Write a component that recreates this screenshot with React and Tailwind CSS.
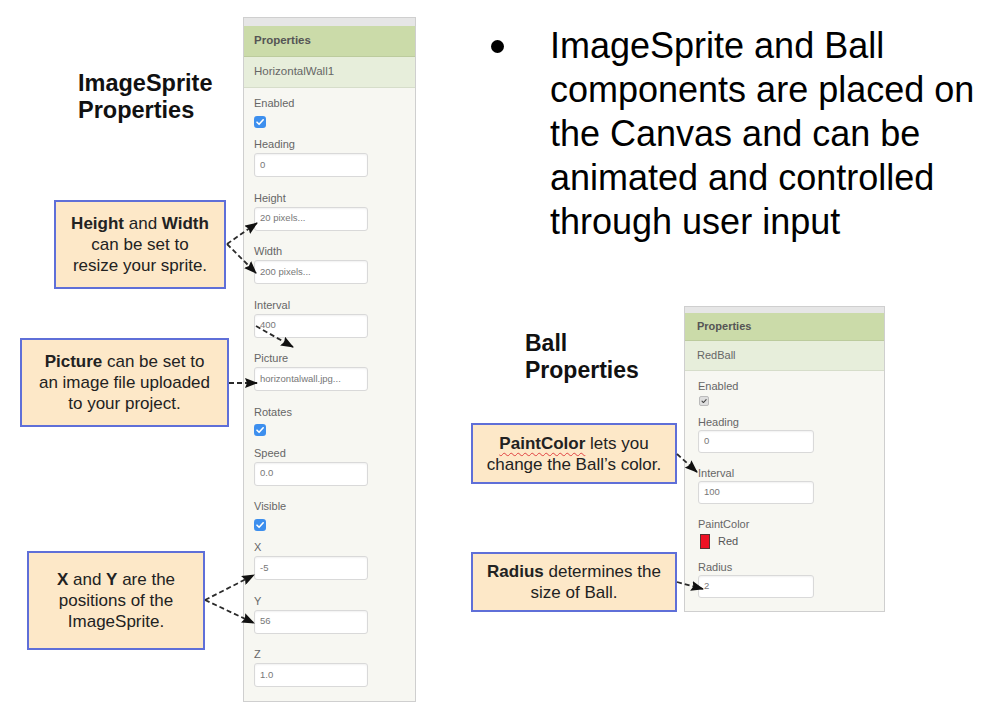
import React from 'react'

const font = { fontFamily: '"Liberation Sans", Arial, sans-serif' }

const Check = ({ color = 'white' }) => (
    <svg viewBox="0 0 12 12" className="w-full h-full">
        <path d="M3 6.2 L5.1 8.3 L9.2 3.8" fill="none" stroke={color} strokeWidth="1.6" strokeLinecap="round" strokeLinejoin="round" />
    </svg>
)

const TextBox = ({ value, wide }) => (
    <div
        className={`${wide ? 'w-[116px] h-[23px]' : 'w-[114px] h-[24px]'} bg-white border border-[#d9d9d9] rounded-[3px] shadow-[inset_0_1px_2px_rgba(0,0,0,0.06)] flex items-center px-[5px] text-[9.5px] text-[#777]`}
    >
        {value}
    </div>
)

const Field = ({ label, value }) => (
    <div className="flex flex-col mb-[13.5px]">
        <div className="h-[14px] leading-[14px] text-[11px] text-[#666]">{label}</div>
        <div className="mt-[2px]">
            <TextBox value={value} />
        </div>
    </div>
)

const CheckField = ({ label }) => (
    <div className="flex flex-col mb-[9.5px]">
        <div className="h-[14px] leading-[14px] text-[11px] text-[#666]">{label}</div>
        <div className="mt-[5.5px] w-[12px] h-[12px] rounded-[3px] bg-[#3d8fee]">
            <Check />
        </div>
    </div>
)

const BallField = ({ label, value }) => (
    <div className="flex flex-col mb-[13px]">
        <div className="h-[14px] leading-[14px] text-[11px] text-[#666]">{label}</div>
        <div className="mt-[1px]">
            <TextBox value={value} wide />
        </div>
    </div>
)

const Callout = ({ className, children }) => (
    <div
        className={`${className} shrink-0 bg-[#fde8c8] border-2 border-[#5f6fd8] flex items-center justify-center text-center text-[17px] leading-[21px] text-[#222]`}
    >
        <div>{children}</div>
    </div>
)

// dashed pointer lines from the callouts to the property fields
const Arrows = () => {
    const lines = [
        [227, 244, 257, 223],
        [227, 244, 256, 273],
        [229, 383, 257, 383],
        [256, 326, 293, 347],
        [205, 600, 254, 575],
        [205, 600, 254, 623],
        [677, 454, 697, 472],
        [677, 582, 703, 589],
    ]
    return (
        <svg className="absolute left-0 top-0 w-[989px] h-[716px] pointer-events-none" viewBox="0 0 989 716">
            <defs>
                <marker id="head" markerWidth="13" markerHeight="10" refX="12" refY="5" orient="auto" markerUnits="userSpaceOnUse">
                    <path d="M0 0 L13 5 L0 10 L2 5 Z" fill="#111" />
                </marker>
            </defs>
            {lines.map(([x1, y1, x2, y2], i) => (
                <line
                    key={i}
                    x1={x1}
                    y1={y1}
                    x2={x2}
                    y2={y2}
                    stroke="#2a2a2a"
                    strokeWidth="1.8"
                    strokeDasharray="5 3"
                    markerEnd="url(#head)"
                />
            ))}
        </svg>
    )
}

const App = () => {
    return (
        <div className="relative w-[989px] h-[716px] bg-white overflow-hidden flex" style={font}>
            {/* left annotations */}
            <div className="w-[243px] shrink-0 flex flex-col">
                <div className="ml-[78px] mt-[70px] text-[23.5px] leading-[27px] font-bold text-[#111]">
                    ImageSprite
                    <br />
                    Properties
                </div>
                <Callout className="ml-[54px] mt-[76px] w-[172px] h-[89px]">
                    <b>Height</b> and <b>Width</b>
                    <br />
                    can be set to
                    <br />
                    resize your sprite.
                </Callout>
                <Callout className="ml-[20px] mt-[49px] w-[209px] h-[89px]">
                    <b>Picture</b> can be set to
                    <br />
                    an image file uploaded
                    <br />
                    to your project.
                </Callout>
                <Callout className="ml-[27px] mt-[124px] w-[178px] h-[99px]">
                    <b>X</b> and <b>Y</b> are the
                    <br />
                    positions of the
                    <br />
                    ImageSprite.
                </Callout>
            </div>

            {/* ImageSprite properties panel */}
            <div className="mt-[17px] w-[173px] h-[685px] shrink-0 flex flex-col border border-[#cfcfcf] bg-[#f7f7f2]">
                <div className="h-[8px] bg-[#e6e6e6]" />
                <div className="h-[31px] bg-[#cbdba9] border-b border-[#bccb9d] flex items-center pl-[10px] text-[11.5px] font-bold text-[#555]">
                    Properties
                </div>
                <div className="h-[31px] bg-[#e7eedb] border-b border-[#d6ddca] flex items-center pl-[10px] text-[11.5px] text-[#666]">
                    HorizontalWall1
                </div>
                <div className="flex flex-col pl-[10px] pt-[8px]">
                    <CheckField label="Enabled" />
                    <Field label="Heading" value="0" />
                    <Field label="Height" value="20 pixels..." />
                    <Field label="Width" value="200 pixels..." />
                    <Field label="Interval" value="400" />
                    <Field label="Picture" value="horizontalwall.jpg..." />
                    <CheckField label="Rotates" />
                    <Field label="Speed" value="0.0" />
                    <CheckField label="Visible" />
                    <Field label="X" value="-5" />
                    <Field label="Y" value="56" />
                    <Field label="Z" value="1.0" />
                </div>
            </div>

            {/* right side */}
            <div className="flex-1 flex flex-col">
                <div className="mt-[24px] ml-[75px] flex items-start">
                    <div className="mt-[16px] w-[13px] h-[13px] rounded-full bg-black shrink-0" />
                    <div className="ml-[46px] w-[430px] text-[36px] leading-[44px] text-black">
                        ImageSprite and Ball components are placed on the Canvas and can be animated and controlled through user input
                    </div>
                </div>
                <div className="flex">
                    <div className="ml-[55px] flex flex-col">
                        <div className="ml-[54px] mt-[86px] text-[23px] leading-[27px] font-bold text-[#111]">
                            Ball
                            <br />
                            Properties
                        </div>
                        <Callout className="mt-[39px] w-[206px] h-[61px]">
                            <b className="underline decoration-wavy decoration-[#e04040] decoration-1 underline-offset-[3px]">PaintColor</b> lets you
                            <br />
                            change the Ball’s color.
                        </Callout>
                        <Callout className="mt-[68px] w-[206px] h-[60px]">
                            <b>Radius</b> determines the
                            <br />
                            size of Ball.
                        </Callout>
                    </div>

                    {/* Ball properties panel */}
                    <div className="ml-[7px] mt-[62px] w-[201px] h-[306px] shrink-0 flex flex-col border border-[#cfcfcf] bg-[#f7f7f2]">
                        <div className="h-[6px] bg-[#e6e6e6]" />
                        <div className="h-[28px] bg-[#cbdba9] border-b border-[#bccb9d] flex items-center pl-[12px] text-[11px] font-bold text-[#555]">
                            Properties
                        </div>
                        <div className="h-[30px] bg-[#e7eedb] border-b border-[#d6ddca] flex items-center pl-[12px] text-[11px] text-[#666]">
                            RedBall
                        </div>
                        <div className="flex flex-col pl-[13px] pt-[8px]">
                            <div className="flex flex-col mb-[9px]">
                                <div className="h-[14px] leading-[14px] text-[11px] text-[#666]">Enabled</div>
                                <div className="mt-[3px] ml-[1px] w-[10px] h-[10px] rounded-[2px] bg-[#dedede] border border-[#bbb]">
                                    <Check color="#444" />
                                </div>
                            </div>
                            <BallField label="Heading" value="0" />
                            <BallField label="Interval" value="100" />
                            <div className="flex flex-col mb-[10px]">
                                <div className="h-[14px] leading-[14px] text-[11px] text-[#666]">PaintColor</div>
                                <div className="mt-[2px] flex items-center">
                                    <div className="ml-[2px] w-[10px] h-[15px] bg-[#ee1124] border border-[#553333]" />
                                    <span className="ml-[8px] text-[11px] text-[#555]">Red</span>
                                </div>
                            </div>
                            <BallField label="Radius" value="2" />
                        </div>
                    </div>
                </div>
            </div>

            <Arrows />
        </div>
    )
}

export default App
